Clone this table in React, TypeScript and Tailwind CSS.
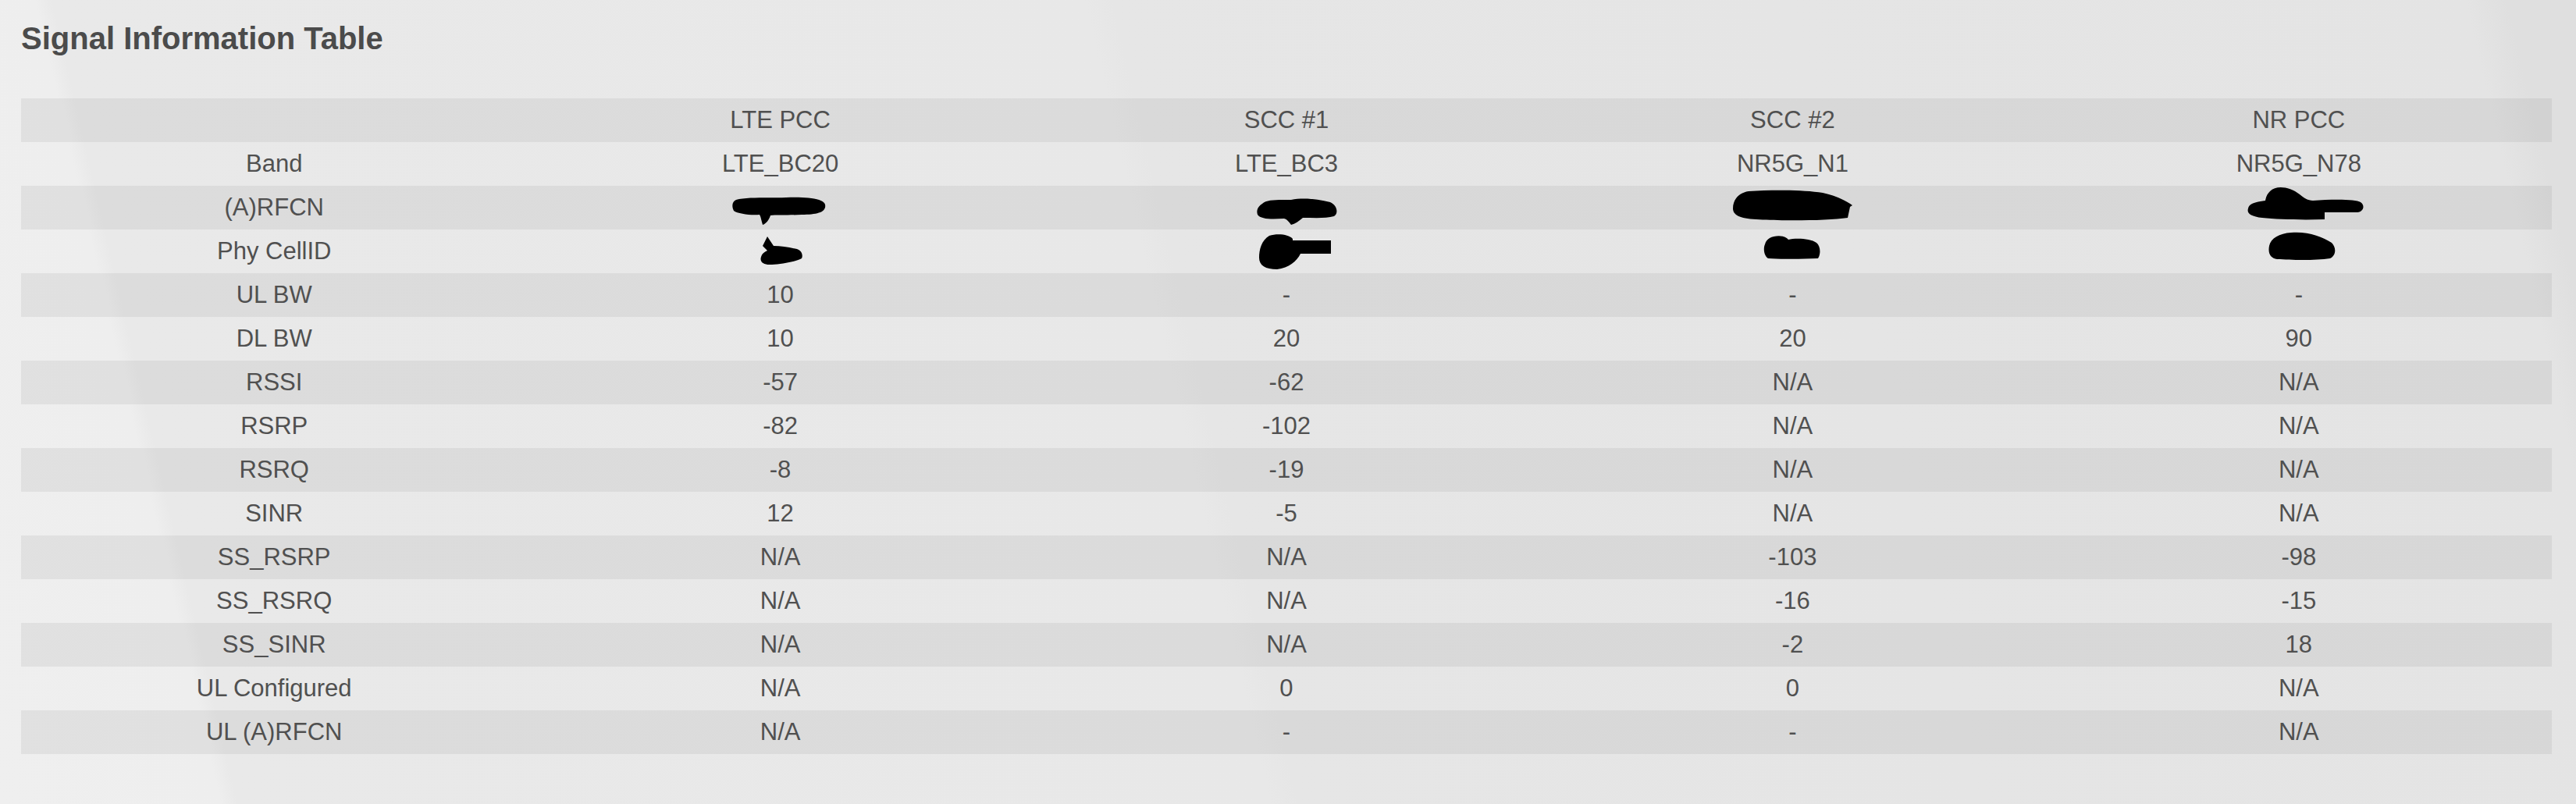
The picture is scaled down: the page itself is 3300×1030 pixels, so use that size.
const rows: string[][] = [
  ['', 'LTE PCC', 'SCC #1', 'SCC #2', 'NR PCC'],
  ['Band', 'LTE_BC20', 'LTE_BC3', 'NR5G_N1', 'NR5G_N78'],
  ['(A)RFCN', '#a1', '#a2', '#a3', '#a4'],
  ['Phy CellID', '#p1', '#p2', '#p3', '#p4'],
  ['UL BW', '10', '-', '-', '-'],
  ['DL BW', '10', '20', '20', '90'],
  ['RSSI', '-57', '-62', 'N/A', 'N/A'],
  ['RSRP', '-82', '-102', 'N/A', 'N/A'],
  ['RSRQ', '-8', '-19', 'N/A', 'N/A'],
  ['SINR', '12', '-5', 'N/A', 'N/A'],
  ['SS_RSRP', 'N/A', 'N/A', '-103', '-98'],
  ['SS_RSRQ', 'N/A', 'N/A', '-16', '-15'],
  ['SS_SINR', 'N/A', 'N/A', '-2', '18'],
  ['UL Configured', 'N/A', '0', '0', 'N/A'],
  ['UL (A)RFCN', 'N/A', '-', '-', 'N/A'],
];

// redacted values, drawn as the black scribbles in the screenshot
const blobs: Record<string, { w: number; h: number; d: string; cls: string }> = {
  '#a1': {
    w: 121, h: 36, cls: 'mt-[8px] ml-[-5px]',
    d: 'M6 4 C20 0 50 2 70 1 C95 0 118 2 120 10 C122 20 110 23 90 23 C70 24 55 23 50 24 C48 30 44 35 40 36 C38 30 38 26 36 23 C25 24 8 22 3 18 C0 12 1 6 6 4 Z',
  },
  '#a2': {
    w: 105, h: 35, cls: 'mt-[8px] ml-[27px]',
    d: 'M8 8 C14 2 30 3 45 3 C60 0 80 2 95 6 C104 10 106 20 100 24 C90 27 75 26 60 26 C55 30 50 34 45 35 C42 31 40 28 36 27 C20 28 6 28 2 22 C0 16 3 11 8 8 Z',
  },
  '#a3': {
    w: 153, h: 40, cls: 'mt-[-6px]',
    d: 'M20 2 C50 0 90 0 115 4 C130 7 145 14 153 20 L150 22 L147 36 C120 40 60 40 30 38 C8 37 0 32 0 24 C0 12 8 4 20 2 Z',
  },
  '#a4': {
    w: 150, h: 43, cls: 'mt-[-11px] ml-[16px]',
    d: 'M30 6 C38 -2 55 0 68 10 C75 16 80 18 85 18 C110 16 140 16 146 20 C152 24 150 32 142 33 L100 33 L100 42 C70 43 40 42 20 40 C5 38 0 34 2 28 C3 22 10 20 24 18 C25 12 27 9 30 6 Z',
  },
  '#p1': {
    w: 57, h: 36, cls: 'mt-[-2px]',
    d: 'M12 0 L20 12 C30 12 40 14 50 16 C56 18 58 24 56 28 C50 32 30 35 18 36 C6 37 2 32 4 26 C5 22 8 20 12 18 L6 12 Z',
  },
  '#p2': {
    w: 94, h: 45, cls: 'ml-[20px]',
    d: 'M15 2 C25 -1 40 0 45 6 L45 8 L94 8 L94 25 L55 25 C50 35 40 43 25 45 C10 45 2 40 2 30 C2 20 5 8 15 2 Z',
  },
  '#p3': {
    w: 74, h: 31, cls: 'mt-[-11px]',
    d: 'M8 4 C15 0 28 0 32 6 C40 4 60 4 68 10 C73 14 74 24 70 30 C50 31 20 31 6 30 C0 26 0 16 2 12 C3 8 5 6 8 4 Z',
  },
  '#p4': {
    w: 88, h: 36, cls: 'mt-[-14px] ml-[8px]',
    d: 'M30 1 C50 -1 70 6 82 14 C88 20 88 30 80 34 C60 37 30 36 12 35 C4 34 0 28 2 18 C4 8 15 2 30 1 Z',
  },
};

function Cell({ value }: { value: string }) {
  const blob = blobs[value];
  if (blob) {
    return (
      <div className="flex h-[56px] items-center justify-center">
        <svg width={blob.w} height={blob.h} viewBox={`0 0 ${blob.w} ${blob.h}`} className={blob.cls}>
          <path d={blob.d} fill="#000" />
        </svg>
      </div>
    );
  }
  return <div className="flex h-[56px] items-center justify-center leading-[56px]">{value}</div>;
}

export default function App() {
  return (
    <div className="min-h-[1030px] w-full bg-[linear-gradient(77deg,#efefef_0%,#eeeeee_8%,#e9e9e9_8.6%,#e8e8e8_46%,#e6e6e6_47%,#e4e4e4_96%,#dfdfdf_97.5%)] px-[27px] pt-[29px] font-['Liberation_Sans',Arial,sans-serif]">
      <h2 className="text-[40px] font-bold leading-[40px] text-[#4b4b4b]">Signal Information Table</h2>
      <div className="mt-[57px] w-[3242px] text-[31px] text-[#505050]">
        {rows.map((row, i) => (
          <div key={i} className={`grid grid-cols-5 ${i % 2 === 0 ? 'bg-black/[0.055]' : ''}`}>
            {row.map((v, j) => (
              <Cell key={j} value={v} />
            ))}
          </div>
        ))}
      </div>
    </div>
  );
}
